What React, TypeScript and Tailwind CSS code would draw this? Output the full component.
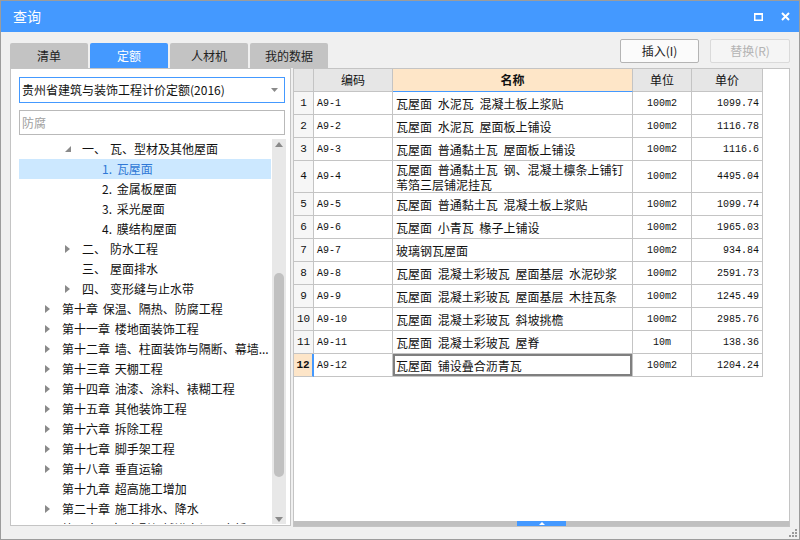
import React from "react";

type TreeNode = {
  level: 0 | 1 | 2;
  label: string;
  prefix?: string;
  arrow?: "open" | "closed";
  selected?: boolean;
};

const treeRows: TreeNode[] = [
  { level: 1, prefix: "一、", label: "瓦、型材及其他屋面", arrow: "open" },
  { level: 2, label: "1. 瓦屋面", selected: true },
  { level: 2, label: "2. 金属板屋面" },
  { level: 2, label: "3. 采光屋面" },
  { level: 2, label: "4. 膜结构屋面" },
  { level: 1, prefix: "二、", label: "防水工程", arrow: "closed" },
  { level: 1, prefix: "三、", label: "屋面排水" },
  { level: 1, prefix: "四、", label: "变形缝与止水带", arrow: "closed" },
  { level: 0, label: "第十章 保温、隔热、防腐工程", arrow: "closed" },
  { level: 0, label: "第十一章 楼地面装饰工程", arrow: "closed" },
  { level: 0, label: "第十二章 墙、柱面装饰与隔断、幕墙...", arrow: "closed" },
  { level: 0, label: "第十三章 天棚工程", arrow: "closed" },
  { level: 0, label: "第十四章 油漆、涂料、裱糊工程", arrow: "closed" },
  { level: 0, label: "第十五章 其他装饰工程", arrow: "closed" },
  { level: 0, label: "第十六章 拆除工程", arrow: "closed" },
  { level: 0, label: "第十七章 脚手架工程", arrow: "closed" },
  { level: 0, label: "第十八章 垂直运输", arrow: "closed" },
  { level: 0, label: "第十九章 超高施工增加" },
  { level: 0, label: "第二十章 施工排水、降水", arrow: "closed" },
  { level: 0, label: "第二十一章 大型机械进出场及安拆", arrow: "closed" },
];

const rows = [
  { code: "A9-1", name: "瓦屋面 水泥瓦 混凝土板上浆贴", unit: "100m2", price: "1099.74" },
  { code: "A9-2", name: "瓦屋面 水泥瓦 屋面板上铺设", unit: "100m2", price: "1116.78" },
  { code: "A9-3", name: "瓦屋面 普通黏土瓦 屋面板上铺设", unit: "100m2", price: "1116.6" },
  { code: "A9-4", name: "瓦屋面 普通黏土瓦 钢、混凝土檩条上铺钉苇箔三层铺泥挂瓦", unit: "100m2", price: "4495.04", tall: true },
  { code: "A9-5", name: "瓦屋面 普通黏土瓦 混凝土板上浆贴", unit: "100m2", price: "1099.74" },
  { code: "A9-6", name: "瓦屋面 小青瓦 椽子上铺设", unit: "100m2", price: "1965.03" },
  { code: "A9-7", name: "玻璃钢瓦屋面", unit: "100m2", price: "934.84" },
  { code: "A9-8", name: "瓦屋面 混凝土彩玻瓦 屋面基层 水泥砂浆", unit: "100m2", price: "2591.73" },
  { code: "A9-9", name: "瓦屋面 混凝土彩玻瓦 屋面基层 木挂瓦条", unit: "100m2", price: "1245.49" },
  { code: "A9-10", name: "瓦屋面 混凝土彩玻瓦 斜坡挑檐", unit: "100m2", price: "2985.76" },
  { code: "A9-11", name: "瓦屋面 混凝土彩玻瓦 屋脊", unit: "10m", price: "138.36" },
  { code: "A9-12", name: "瓦屋面 铺设叠合沥青瓦", unit: "100m2", price: "1204.24" },
];

function Arrow({ kind }: { kind?: "open" | "closed" }) {
  if (kind === "open")
    return (
      <svg width="6" height="6" viewBox="0 0 6 6">
        <polygon points="6,0 6,6 0,6" fill="#8a8a8a" />
      </svg>
    );
  if (kind === "closed")
    return (
      <svg width="5" height="8" viewBox="0 0 5 8">
        <polygon points="0,0 5,4 0,8" fill="#8a8a8a" />
      </svg>
    );
  return null;
}

function TreeRow({ node }: { node: TreeNode }) {
  const pad = node.level === 0 ? "pl-[26px]" : node.level === 1 ? "pl-[46px]" : "pl-[83px]";
  return (
    <div
      className={`h-[20px] flex items-center whitespace-nowrap [word-spacing:2px] ${pad} ${
        node.selected ? "bg-[#cce8ff] text-[#2f78d6]" : "text-[#111]"
      }`}
    >
      {node.level < 2 && (
        <span className="w-[17px] flex items-center">
          <Arrow kind={node.arrow} />
        </span>
      )}
      {node.prefix && <span className="inline-block w-[28px]">{node.prefix}</span>}
      <span>{node.label}</span>
    </div>
  );
}

export default function App() {
  return (
    <div className="w-[800px] h-[540px] flex flex-col border border-[#9c9c9c] bg-[#f0f0f0] overflow-hidden font-['Noto_Sans_CJK_SC',sans-serif] text-[12px]">
      {/* Title */}
      <div className="h-[31px] bg-[#4499ff] flex items-center justify-between pl-[12px] pr-[9px]">
        <span className="text-white text-[14px]">查询</span>
        <div className="flex items-center gap-[18px]">
          <svg width="9" height="8" viewBox="0 0 9 8">
            <rect x="0.75" y="1" width="7.5" height="6.25" fill="none" stroke="#fff" strokeWidth="1.5" />
            <rect x="0" y="0" width="9" height="2" fill="#fff" />
          </svg>
          <svg width="9" height="9" viewBox="0 0 9 9">
            <path d="M1 1L8 8M8 1L1 8" stroke="#fff" strokeWidth="2" />
          </svg>
        </div>
      </div>

      {/* Tabs + buttons */}
      <div className="h-[36px] flex justify-between pl-[9px] pr-[9px]">
        <div className="flex items-end gap-[2px]">
          {["清单", "定额", "人材机", "我的数据"].map((t) => (
            <div
              key={t}
              className={`w-[78px] h-[25px] flex items-center justify-center rounded-t-[2px] ${
                t === "定额" ? "bg-[#4499ff] text-white" : "bg-[#c3c3c3] text-[#222]"
              }`}
            >
              {t}
            </div>
          ))}
        </div>
        <div className="flex items-start gap-[11px] pt-[7px]">
          <button className="w-[79px] h-[24px] border border-[#b4b4b4] rounded-[2px] bg-[#fbfbfb] text-[#222]">
            插入(I)
          </button>
          <button className="w-[80px] h-[24px] border border-[#dadada] rounded-[2px] bg-[#f5f5f5] text-[#b3b3b3]">
            替换(R)
          </button>
        </div>
      </div>

      {/* Main */}
      <div className="flex items-start pl-[9px]">
        {/* Left panel */}
        <div className="w-[281px] h-[458px] border border-[#c4c4c4] bg-white flex flex-col pl-[8px] pt-[8px]">
          <div className="w-[266px] h-[26px] border border-[#4499ff] flex items-center justify-between pl-[2px] pr-[6px] text-[#111]">
            <span>贵州省建筑与装饰工程计价定额(2016)</span>
            <svg width="7" height="4" viewBox="0 0 7 4">
              <polygon points="0,0 7,0 3.5,4" fill="#8a8a8a" />
            </svg>
          </div>
          <div className="w-[266px] h-[25px] mt-[7px] border border-[#b9b9b9] flex items-center pl-[2px] text-[#a0a0a0]">
            防腐
          </div>
          <div className="flex mt-[4px] h-[385px]">
            <div className="w-[252px] overflow-hidden">
              {treeRows.map((n, i) => (
                <TreeRow key={i} node={n} />
              ))}
            </div>
            <div className="w-[14px] ml-[1px] bg-[#e8e8e8] flex flex-col items-center">
              <svg width="8" height="5" viewBox="0 0 8 5" className="mt-[3px]">
                <polygon points="0,5 8,5 4,0" fill="#8a8a8a" />
              </svg>
              <div className="w-[10px] h-[204px] mt-[126px] rounded-[5px] bg-[#c1c1c1]" />
              <svg width="8" height="5" viewBox="0 0 8 5" className="mt-auto mb-[2px]">
                <polygon points="0,0 8,0 4,5" fill="#8a8a8a" />
              </svg>
            </div>
          </div>
        </div>

        {/* Right panel */}
        <div className="w-[497px] h-[459px] ml-[2px] border border-[#c4c4c4] bg-white flex flex-col">
          <div className="flex-1">
            {/* Header */}
            <div className="flex h-[23px] text-[#111]">
              <div className="w-[20px] bg-[#e6e6e6] border-r border-b border-[#c4c4c4]" />
              <div className="w-[79px] bg-[#e6e6e6] border-r border-b border-[#c4c4c4] flex items-center justify-center">编码</div>
              <div className="w-[240px] bg-[#fee6c8] border-r border-[#c4c4c4] border-b border-b-[#4499ff] flex items-center justify-center font-bold">名称</div>
              <div className="w-[59px] bg-[#e6e6e6] border-r border-b border-[#c4c4c4] flex items-center justify-center">单位</div>
              <div className="w-[71px] bg-[#e6e6e6] border-r border-b border-[#c4c4c4] flex items-center justify-center">单价</div>
            </div>
            {rows.map((r, i) => {
              const last = i === rows.length - 1;
              return (
                <div key={r.code} className={`flex text-[#111] ${r.tall ? "h-[32px]" : "h-[23px]"}`}>
                  <div
                    className={`w-[20px] border-b border-[#c4c4c4] flex items-center justify-center font-['Liberation_Mono',monospace] text-[11px] ${
                      last ? "bg-[#fde5c8] border-r-2 border-r-[#4499ff] font-bold" : "bg-[#f6f6f6] border-r"
                    }`}
                  >
                    {i + 1}
                  </div>
                  <div className="w-[79px] border-r border-b border-[#c4c4c4] flex items-center pl-[3px] font-['Liberation_Mono',monospace] text-[10px]">
                    {r.code}
                  </div>
                  <div
                    className={`w-[240px] border-r border-b border-[#c4c4c4] flex items-center pl-[3px] pr-[4px] leading-[15px] [word-spacing:3px] ${
                      last ? "shadow-[inset_0_0_0_2px_#7f7f7f]" : ""
                    }`}
                  >
                    {r.name}
                  </div>
                  <div className="w-[59px] border-r border-b border-[#c4c4c4] flex items-center justify-center font-['Liberation_Mono',monospace] text-[10px]">
                    {r.unit}
                  </div>
                  <div className="w-[71px] border-r border-b border-[#c4c4c4] flex items-center justify-end pr-[3px] font-['Liberation_Mono',monospace] text-[10px]">
                    {r.price}
                  </div>
                </div>
              );
            })}
          </div>
          <div className="h-[5px] bg-[#c0c0c0] flex justify-center">
            <div className="w-[49px] h-[5px] bg-[#4499ff] flex items-center justify-center">
              <svg width="6" height="3" viewBox="0 0 6 3">
                <polygon points="0,3 6,3 3,0" fill="#fff" />
              </svg>
            </div>
          </div>
        </div>
      </div>

      {/* Bottom strip with grip */}
      <div className="flex-1 flex justify-end items-end pr-[1px] pb-[1px]">
        <svg width="9" height="9" viewBox="0 0 9 9">
          <rect x="6" y="0" width="2" height="2" fill="#9a9a9a" />
          <rect x="3" y="3" width="2" height="2" fill="#9a9a9a" />
          <rect x="6" y="3" width="2" height="2" fill="#9a9a9a" />
          <rect x="0" y="6" width="2" height="2" fill="#9a9a9a" />
          <rect x="3" y="6" width="2" height="2" fill="#9a9a9a" />
          <rect x="6" y="6" width="2" height="2" fill="#9a9a9a" />
        </svg>
      </div>
    </div>
  );
}
